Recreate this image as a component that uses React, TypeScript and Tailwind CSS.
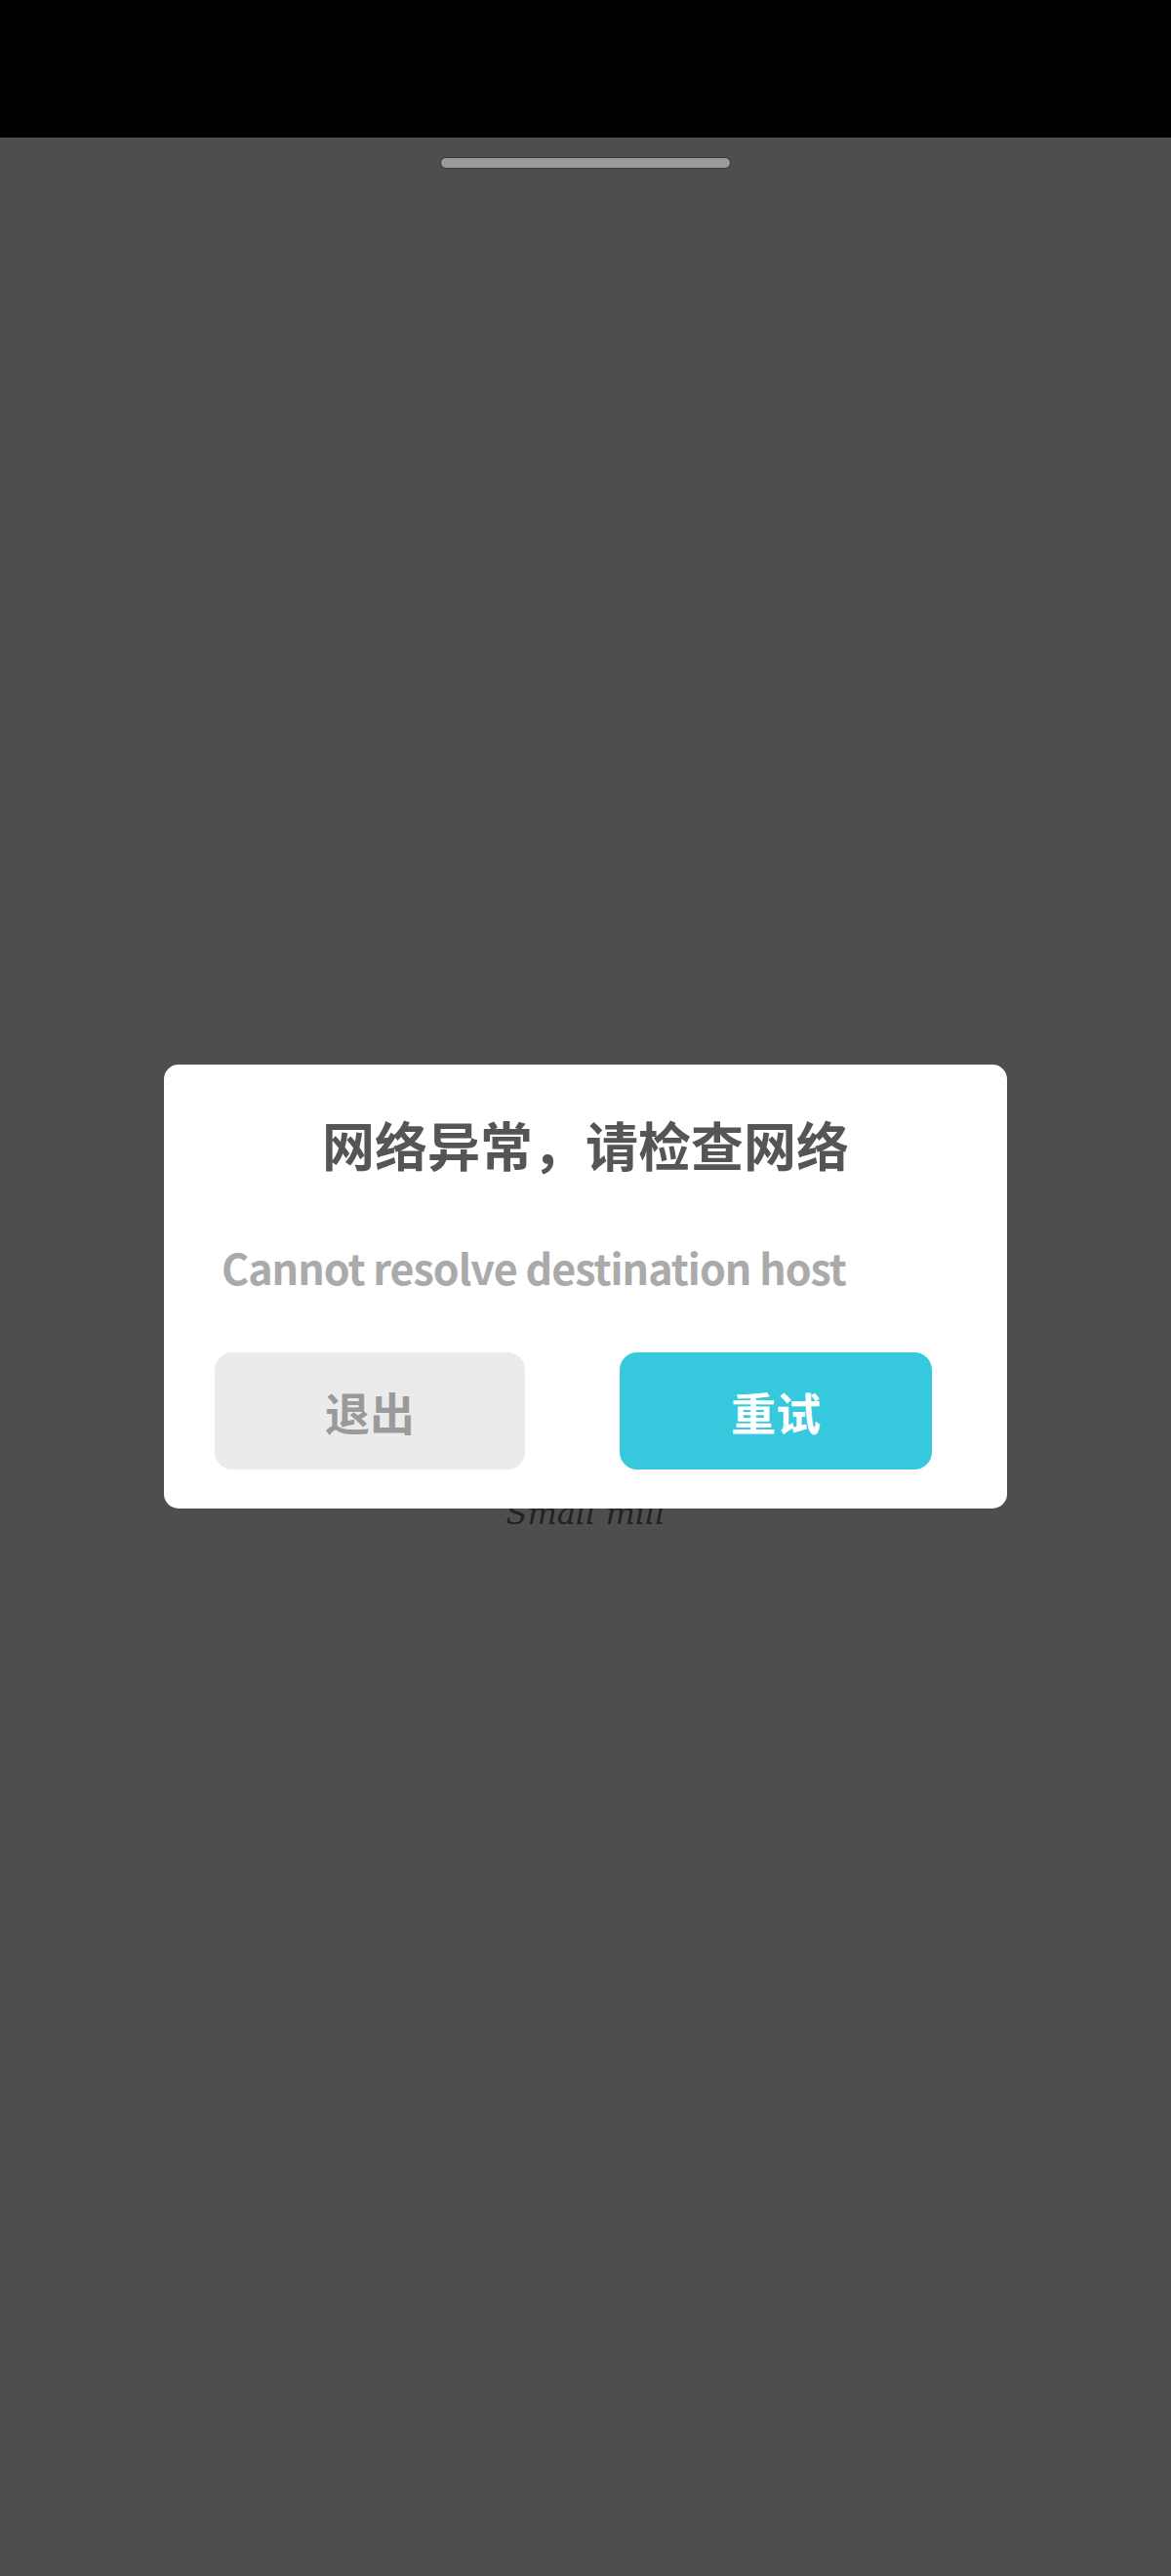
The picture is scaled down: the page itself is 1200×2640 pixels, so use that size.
import React from "react";

export default function App() {
  const cjk = { fontFamily: '"Noto Sans CJK SC", "Noto Sans", sans-serif' };
  return (
    <div className="relative w-[1200px] h-[2640px] bg-[#4e4e4e] flex flex-col overflow-hidden" style={cjk}>
      <div className="h-[141px] bg-black shrink-0" />
      <div className="flex justify-center pt-[21px]">
        <div className="w-[296px] h-[10px] rounded-full bg-[#9a9a9a] ring-1 ring-[#3c3c3c]" />
      </div>
      <div className="flex justify-center mt-[1359px]">
        <span
          className="text-[32px] leading-[40px] italic text-[#222]"
          style={{ fontFamily: '"DejaVu Serif", "Liberation Serif", cursive' }}
        >
          Small mill
        </span>
      </div>

      <div className="absolute left-[168px] top-[1091px] w-[864px] h-[455px] bg-white rounded-[15px] flex flex-col">
        <div className="pt-[52px] text-center text-[54px] leading-[60px] font-bold text-[#555555]">
          网络异常，请检查网络
        </div>
        <div className="pl-[59px] pt-[68px] text-[43px] leading-[54px] tracking-[-1px] font-semibold text-[#aaaaaa]">
          Cannot resolve destination host
        </div>
        <div className="flex pl-[52px] pt-[61px] gap-[97px]">
          <div className="w-[318px] h-[120px] rounded-[18px] bg-[#ebebeb] flex items-center justify-center text-[46px] font-bold text-[#9a9a9a]">
            退出
          </div>
          <div className="w-[320px] h-[120px] rounded-[18px] bg-[#36c9de] flex items-center justify-center text-[46px] font-bold text-white">
            重试
          </div>
        </div>
      </div>
    </div>
  );
}
